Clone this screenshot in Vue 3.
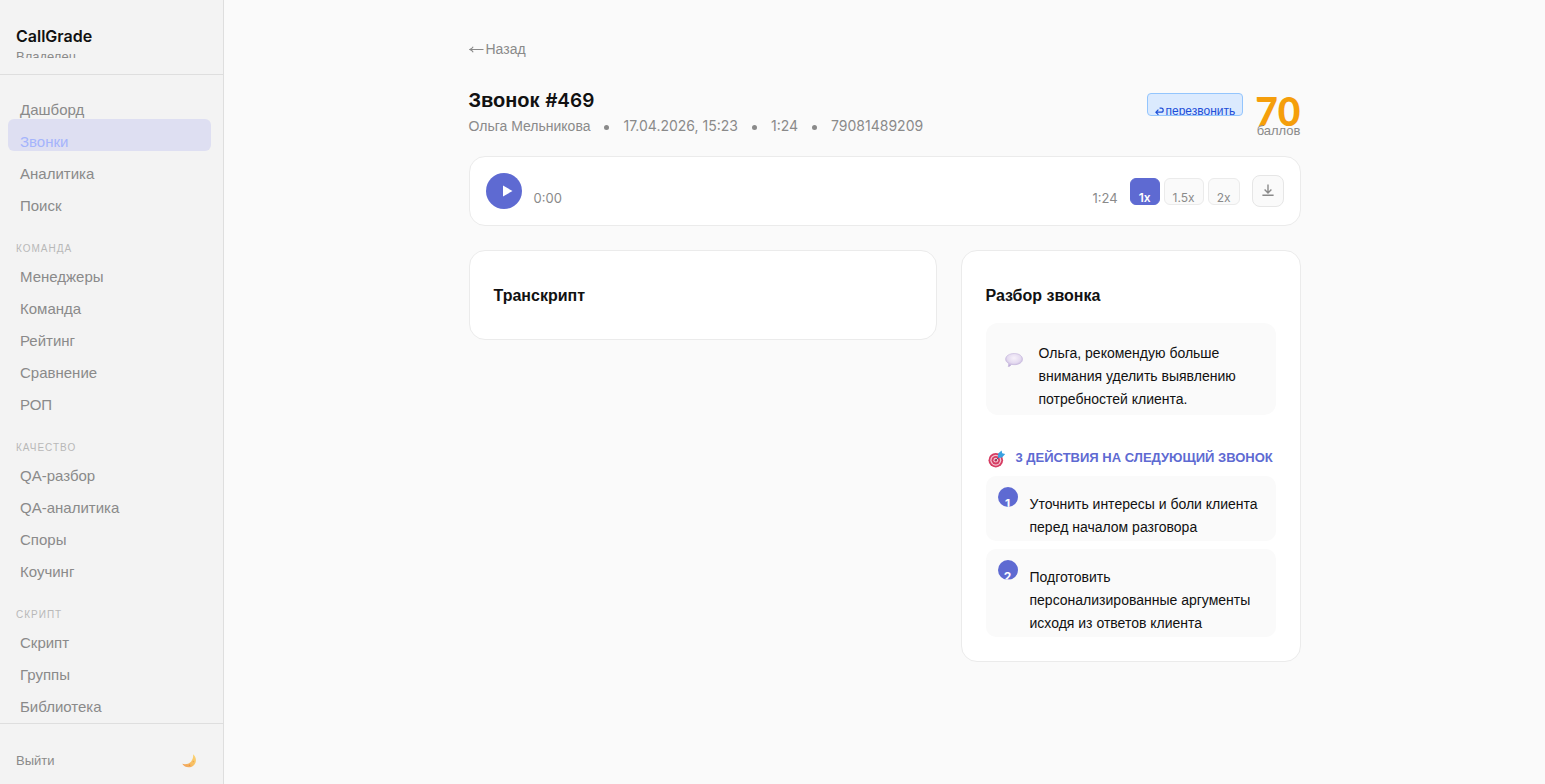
<script setup>
import { ref } from 'vue'

const groups = [
  { title: '', items: ['Дашборд', 'Звонки', 'Аналитика', 'Поиск'] },
  { title: 'Команда', items: ['Менеджеры', 'Команда', 'Рейтинг', 'Сравнение', 'РОП'] },
  { title: 'Качество', items: ['QA-разбор', 'QA-аналитика', 'Споры', 'Коучинг'] },
  { title: 'Скрипт', items: ['Скрипт', 'Группы', 'Библиотека'] },
]
const current = 'Звонки'
const speeds = ['1x', '1.5x', '2x']
const speed = ref('1x')
const actions = [
  'Уточнить интересы и боли клиента перед началом разговора',
  'Подготовить персонализированные аргументы исходя из ответов клиента',
]
</script>

<template>
  <div class="layout">
    <aside class="sidebar">
      <header class="brand">
        <div class="brand-name">CallGrade</div>
        <div class="brand-role">Владелец</div>
      </header>
      <nav class="nav">
        <section v-for="g in groups" :key="g.title" class="nav-group">
          <h2 v-if="g.title" class="nav-title">{{ g.title }}</h2>
          <a
            v-for="item in g.items"
            :key="item"
            href="#"
            class="nav-item"
            :class="{ active: item === current && !g.title }"
          >{{ item }}</a>
        </section>
      </nav>
      <footer class="side-foot">
        <button type="button" class="logout">Выйти</button>
        <button type="button" class="theme" aria-label="Тема">
          <svg width="16" height="16" viewBox="0 0 16 16">
            <defs>
              <linearGradient id="moon" x1="0" y1="1" x2="1" y2="0">
                <stop offset="0" stop-color="#ee9a55" />
                <stop offset="0.5" stop-color="#f8c063" />
                <stop offset="1" stop-color="#fbd777" />
              </linearGradient>
            </defs>
            <path d="M12 1.2C16 4.4 15.8 10 12.2 12.8C8.8 15.4 3.6 14.6 1.2 10.8C4.6 12 8.2 10.8 10.2 8.4C11.8 6.4 12.5 3.8 12 1.2Z" fill="url(#moon)" />
            <circle cx="8.5" cy="12.2" r="0.8" fill="#e98f4c" />
            <circle cx="12.4" cy="8.6" r="0.8" fill="#f0a650" />
          </svg>
        </button>
      </footer>
    </aside>

    <main class="main">
      <div class="page">
        <a href="#" class="back">
          <svg width="15" height="8" viewBox="0 0 15 8" fill="none" stroke="currentColor" stroke-width="1.1">
            <path d="M14.5 4.5H1M4.2 1.8C3.4 3.2 2.4 4 0.8 4.5C2.4 5 3.4 5.8 4.2 7.2" />
          </svg>
          <span>Назад</span>
        </a>

        <header class="head">
          <div class="head-text">
            <h1>Звонок <span class="num">#469</span></h1>
            <p class="meta">
              <span>Ольга Мельникова</span>
              <i class="dot"></i>
              <span class="num">17.04.2026, 15:23</span>
              <i class="dot"></i>
              <span class="num">1:24</span>
              <i class="dot"></i>
              <span class="num">79081489209</span>
            </p>
          </div>
          <div class="tag">
            <svg width="9" height="9" viewBox="0 0 9 9" fill="none" stroke="currentColor" stroke-width="1.2">
              <path d="M3.4 2.6L0.9 5.2L3.4 7.8M0.9 5.2H6.2A2 2 0 0 0 6.2 1.2H4.6" />
            </svg>
            <span>перезвонить</span>
          </div>
          <div class="score">
            <strong>70</strong>
            <span>баллов</span>
          </div>
        </header>

        <section class="card player">
          <button type="button" class="play" aria-label="Воспроизвести">
            <svg width="12" height="12" viewBox="0 0 12 12"><path d="M2 0.5L11.5 6L2 11.5Z" fill="#fff" /></svg>
          </button>
          <span class="time num">0:00</span>
          <span class="time end num">1:24</span>
          <div class="speeds">
            <button
              v-for="s in speeds"
              :key="s"
              type="button"
              class="speed num"
              :class="{ on: s === speed }"
              @click="speed = s"
            >{{ s }}</button>
          </div>
          <button type="button" class="download" aria-label="Скачать">
            <svg width="14" height="14" viewBox="0 0 14 14" fill="none" stroke="currentColor" stroke-width="1.4">
              <path d="M7 0.5V8.8M3.6 5.6L7 9L10.4 5.6M1.4 11.3H12.6" />
            </svg>
          </button>
        </section>

        <div class="columns">
          <section class="card panel">
            <h2>Транскрипт</h2>
          </section>

          <section class="card panel review">
            <h2>Разбор звонка</h2>
            <div class="advice">
              <svg width="18" height="14" viewBox="0 0 18 14">
                <defs>
                  <radialGradient id="bubble" cx="0.5" cy="0.35" r="0.65">
                    <stop offset="0" stop-color="#f7f1fa" />
                    <stop offset="0.6" stop-color="#e4daf0" />
                    <stop offset="1" stop-color="#bba9d6" />
                  </radialGradient>
                </defs>
                <path d="M9.2 0.5C14 0.5 17.5 2.9 17.5 6.2C17.5 9.5 14 11.7 9.2 11.7C8.2 11.7 7.3 11.6 6.5 11.4C5.8 12.5 4.6 13.4 3.2 13.5C3.7 12.6 3.8 11.5 3.5 10.3C1.7 9.3 0.6 7.9 0.6 6.2C0.6 2.9 4.4 0.5 9.2 0.5Z" fill="url(#bubble)" stroke="#c3b4da" stroke-width="0.6" />
              </svg>
              <p>Ольга, рекомендую больше внимания уделить выявлению потребностей клиента.</p>
            </div>
            <h3>
              <svg width="18" height="18" viewBox="0 0 18 18">
                <circle cx="7.8" cy="10.2" r="7.3" fill="#d63d63" />
                <circle cx="7.8" cy="10.2" r="5.5" fill="#f3c5d1" />
                <circle cx="7.8" cy="10.2" r="4.2" fill="#d63d63" />
                <circle cx="7.8" cy="10.2" r="2.4" fill="#f3c5d1" />
                <circle cx="7.8" cy="10.2" r="1.2" fill="#b82d55" />
                <path d="M7.8 10.2L13 5" stroke="#5a5578" stroke-width="1" />
                <path d="M10 7.4L10.2 3.6L13.6 0.4L14.2 3.2L17.2 3.9L14 7.4L10.8 7.8Z" fill="#38a1e0" />
              </svg>
              <span>3 ДЕЙСТВИЯ НА СЛЕДУЮЩИЙ ЗВОНОК</span>
            </h3>
            <ol class="actions">
              <li v-for="(a, i) in actions" :key="i">
                <span class="badge num">{{ i + 1 }}</span>
                <p>{{ a }}</p>
              </li>
            </ol>
          </section>
        </div>
      </div>
    </main>
  </div>
</template>

<style>
body {
  background: #fafafa;
}
</style>

<style scoped>
* {
  box-sizing: border-box;
  margin: 0;
}
.layout {
  display: flex;
  height: 100vh;
  font-family: 'Liberation Sans', Arial, sans-serif;
  font-size: 14px;
  color: #111;
}
button {
  font: inherit;
  border: 0;
  padding: 0;
  background: none;
  cursor: pointer;
}
a {
  text-decoration: none;
}
.num {
  font-family: Inter, 'Liberation Sans', sans-serif;
}
.sidebar {
  display: flex;
  flex-direction: column;
  flex: none;
  width: 224px;
  background: #f3f3f3;
  border-right: 1px solid #dedede;
  color: #8a8a8a;
}
.brand {
  padding: 26px 16px 16px;
  border-bottom: 1px solid #dedede;
}
.brand-name {
  font-family: Inter, sans-serif;
  font-weight: 600;
  font-size: 16px;
  line-height: 21px;
  color: #111;
}
.brand-role {
  height: 11px;
  overflow: hidden;
  font-size: 13px;
  line-height: 19px;
}
.nav {
  flex: 1;
  min-height: 0;
  overflow: hidden;
  padding: 12px 12px 0 8px;
}
.nav-title {
  padding: 28px 8px 0;
  height: 39px;
  font-size: 10px;
  line-height: 12px;
  font-weight: 400;
  letter-spacing: 1px;
  text-transform: uppercase;
  color: #b8b8b8;
}
.nav-item {
  display: block;
  padding: 14px 12px 0;
  border-radius: 6px;
  font-size: 15px;
  line-height: 18px;
  color: #8a8a8a;
}
.nav-item.active {
  background: #dedff2;
  color: #a5b4fc;
}
.side-foot {
  display: flex;
  align-items: center;
  justify-content: space-between;
  height: 61px;
  padding: 13px 26px 0 16px;
  border-top: 1px solid #dedede;
}
.logout {
  font-size: 13px;
  color: #8a8a8a;
}
.theme {
  display: flex;
}
.main {
  flex: 1;
  min-width: 0;
  overflow: auto;
}
.page {
  max-width: 880px;
  margin: 0 auto;
  padding: 40px 24px;
}
.back {
  display: flex;
  align-items: center;
  gap: 2px;
  width: max-content;
  line-height: 18px;
  color: #8a8a8a;
}
.head {
  display: flex;
  align-items: flex-start;
  gap: 12px;
  padding-top: 30px;
  height: 98px;
}
.head-text {
  flex: 1;
}
h1 {
  font-size: 20px;
  line-height: 24px;
  font-weight: 700;
}
h1 .num {
  font-size: 19px;
  font-weight: 600;
}
.meta {
  display: flex;
  align-items: center;
  gap: 14px;
  padding-top: 3px;
  line-height: 20px;
  color: #8a8a8a;
}
.dot {
  width: 5px;
  height: 5px;
  margin-top: 2px;
  border-radius: 50%;
  background: #8a8a8a;
}
.tag {
  display: flex;
  gap: 2px;
  height: 23px;
  margin-top: 5px;
  padding: 10px 7px 0;
  overflow: hidden;
  border: 1px solid #93c5fd;
  border-radius: 4px;
  background: #dbeafe;
  color: #1d4ed8;
  font-size: 12px;
  line-height: 15px;
}
.tag svg {
  flex: none;
  margin-top: 3px;
}
.score {
  display: flex;
  flex-direction: column;
  align-items: flex-end;
}
.score strong {
  height: 35px;
  padding-top: 3px;
  font-family: Lato, sans-serif;
  font-size: 39px;
  font-weight: 900;
  line-height: 40px;
  color: #f59e0b;
}
.score span {
  font-size: 13px;
  line-height: 15px;
  color: #8a8a8a;
}
.card {
  background: #fff;
  border: 1px solid #ebebeb;
  border-radius: 16px;
}
.player {
  display: flex;
  align-items: center;
  gap: 12px;
  height: 70px;
  padding: 0 16px;
}
.play {
  display: flex;
  align-items: center;
  justify-content: center;
  width: 36px;
  height: 36px;
  padding-left: 6px;
  border-radius: 50%;
  background: #5e6ad2;
}
.time {
  padding-top: 13px;
  font-size: 13px;
  line-height: 16px;
  color: #8a8a8a;
}
.end {
  margin-left: auto;
}
.speeds {
  display: flex;
  gap: 4px;
}
.speed {
  height: 27px;
  padding: 11px 8px 0;
  overflow: hidden;
  border: 1px solid #ebebeb;
  border-radius: 6px;
  background: #fafafa;
  color: #8a8a8a;
  font-size: 12px;
  line-height: 16px;
}
.speed.on {
  border-color: #5e6ad2;
  background: #5e6ad2;
  color: #fff;
  font-weight: 600;
}
.download {
  display: flex;
  align-items: center;
  justify-content: center;
  width: 32px;
  height: 32px;
  border: 1px solid #e6e6e6;
  border-radius: 8px;
  background: #fafafa;
  color: #8a8a8a;
}
.columns {
  display: grid;
  grid-template-columns: minmax(0, 1fr) 340px;
  align-items: start;
  gap: 24px;
  margin-top: 24px;
}
.panel {
  padding: 35px 24px 24px;
}
.panel h2 {
  font-size: 16px;
  line-height: 20px;
  padding-bottom: 9px;
}
.review h2 {
  padding-bottom: 17px;
}
.advice {
  display: flex;
  gap: 16px;
  padding: 19px 19px 4px;
  border-radius: 12px;
  background: #fafafa;
}
.advice svg {
  flex: none;
  margin-top: 11px;
}
.advice p,
.actions p {
  line-height: 23px;
}
h3 {
  display: flex;
  gap: 10px;
  margin-top: 34px;
  padding-left: 2px;
  height: 27px;
  font-size: 13px;
  line-height: 18px;
  color: #5e6ad2;
  white-space: nowrap;
}
h3 svg {
  flex: none;
  margin-top: 1px;
}
.actions {
  display: grid;
  gap: 8px;
  padding: 0;
  list-style: none;
}
.actions li {
  display: flex;
  gap: 12px;
  padding: 17px 14px 2px 12px;
  border-radius: 10px;
  background: #fafafa;
}
.badge {
  flex: none;
  width: 20px;
  height: 20px;
  margin-top: -6px;
  padding-top: 9px;
  overflow: hidden;
  border-radius: 50%;
  background: #5e6ad2;
  color: #fff;
  font-size: 12px;
  font-weight: 700;
  line-height: 16px;
  text-align: center;
}
</style>
